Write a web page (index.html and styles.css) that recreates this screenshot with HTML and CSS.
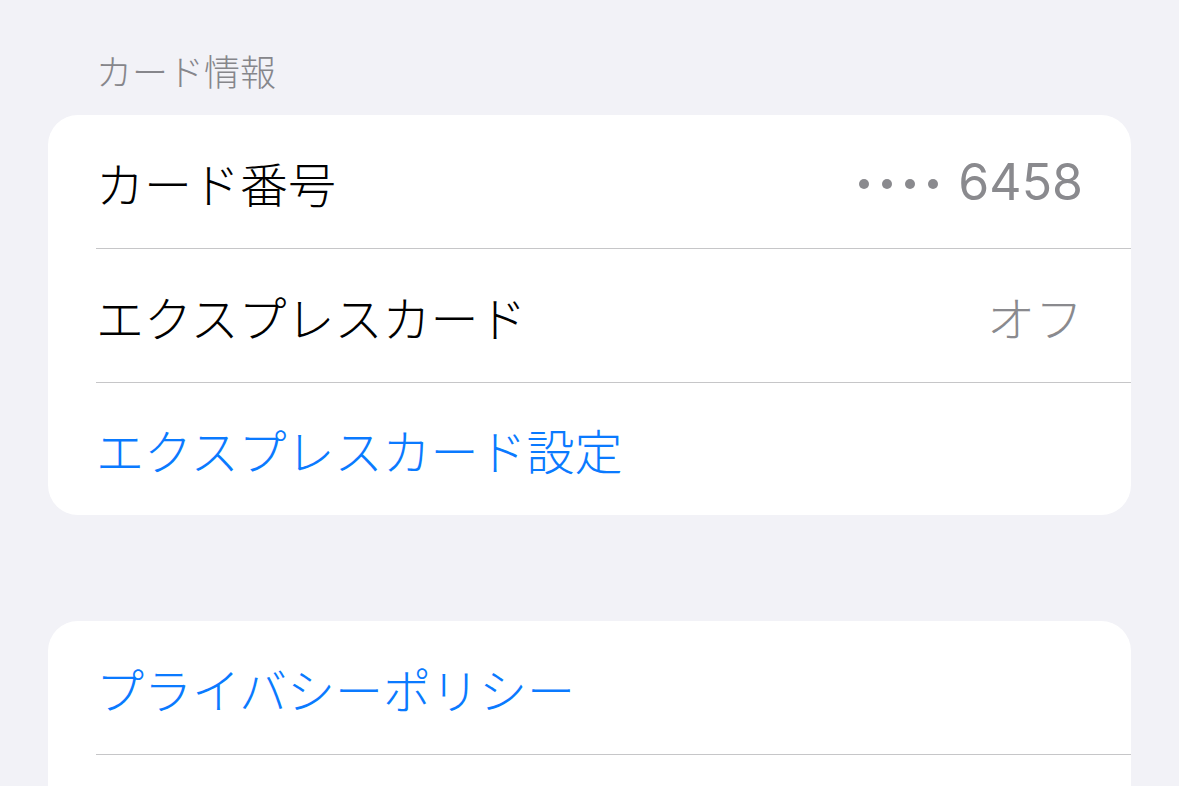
FILE: index.html
```html
<!DOCTYPE html>
<html lang="ja">
<head>
    <meta charset="UTF-8">
    <title>カード情報</title>
    <link rel="stylesheet" href="styles.css">
</head>
<body>
<div class="settings">
    <div class="section-title">カード情報</div>
    <div class="group">
        <div class="row">
            <span class="label">カード番号</span>
            <span class="value">
                <span class="dots"><i></i><i></i><i></i><i></i></span>
                <span class="digits">6458</span>
            </span>
        </div>
        <div class="row">
            <span class="label">エクスプレスカード</span>
            <span class="value">オフ</span>
        </div>
        <div class="row">
            <span class="label link">エクスプレスカード設定</span>
        </div>
    </div>

    <div class="group second">
        <div class="row">
            <span class="label link">プライバシーポリシー</span>
        </div>
        <div class="row">
            <span class="label link">&nbsp;</span>
        </div>
    </div>
</div>
</body>
</html>
```

FILE: styles.css
```css
html, body {
    margin: 0;
    background: #f2f2f7;
    font-family: "Noto Sans CJK JP", "Noto Sans", sans-serif;
}
.settings {
    padding: 0 48px;
}
.section-title {
    color: #86868b;
    font-size: 36px;
    font-weight: 300;
    line-height: 48px;
    padding: 46px 0 0 48px;
    height: 115px;
    box-sizing: border-box;
}
.group {
    background: #fff;
    border-radius: 30px;
    overflow: hidden;
}
.group.second {
    margin-top: 106px;
}
.row {
    display: flex;
    align-items: center;
    justify-content: space-between;
    height: 134px;
    box-sizing: border-box;
    margin-left: 48px;
    padding-right: 48px;
    border-bottom: 1px solid #c6c6c8;
    font-size: 48px;
    font-weight: 300;
}
.row:last-child {
    border-bottom: none;
    height: 132px;
}
.label {
    color: #000;
}
.label.link {
    color: #0a7aff;
}
.value {
    color: #8a8a8e;
    display: flex;
    align-items: center;
}
.dots {
    display: flex;
    gap: 13px;
    margin-right: 20px;
    margin-top: 4px;
}
.dots i {
    width: 10px;
    height: 10px;
    border-radius: 50%;
    background: #8a8a8e;
}
.digits {
    font-family: Inter, "Noto Sans", sans-serif;
    font-size: 50px;
    font-weight: 400;
}
```
